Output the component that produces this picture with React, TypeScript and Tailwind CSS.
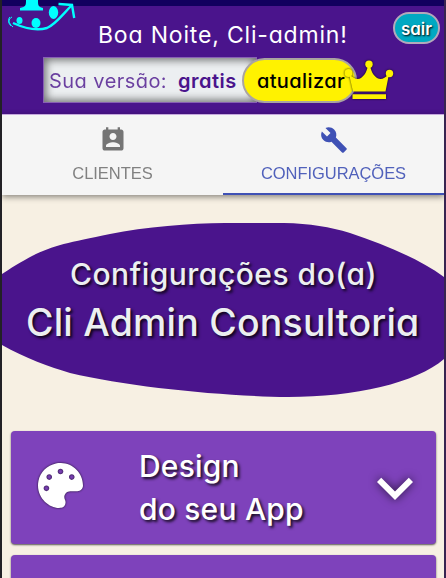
import React from "react";
import { FaPalette } from "react-icons/fa";

const shade = "[text-shadow:2px_2px_3px_rgba(0,0,0,0.85)]";

function Logo() {
  return (
    <svg className="absolute left-0 top-0" width="80" height="34" viewBox="0 0 80 34" fill="#0ff">
      <path d="M26 0h12c0 5 0 7 5 8v2.500H20V8c6-1 6-3 6-8z" />
      <ellipse cx="19.500" cy="20.500" rx="3" ry="3.500" />
      <ellipse cx="36" cy="23" rx="4.500" ry="5" />
      <ellipse cx="53.500" cy="12.500" rx="4.700" ry="6.500" />
      <path d="M13 23c11 5 24 8 34 5 9-4 15-13 25-23" fill="none" stroke="#0ff" strokeWidth="2.400" />
      <path d="M58.500 4l13.500 1 2.200 13" fill="none" stroke="#0ff" strokeWidth="2.400" />
      <path d="M12 17c-4 2-4 6 1 10M10 17c-3 3-1 7 1 9" fill="none" stroke="#0ff" strokeWidth="1" />
    </svg>
  );
}

function Crown() {
  return (
    <svg className="relative -ml-[14px] shrink-0 [filter:drop-shadow(0_0_1px_rgba(0,0,0,0.8))]" width="52" height="44" viewBox="342 58 52 44" fill="#fff200">
      <circle cx="347.500" cy="73" r="3.900" />
      <circle cx="368" cy="64.300" r="3.700" />
      <circle cx="388.500" cy="73.500" r="3.700" />
      <path d="M348 74C353 79 357 80 360 78C364 75 366 71 367 65H369C370 71 372 75 376 78C380 80 383 79 388 74L384.500 91.500H352z" />
      <path d="M351.500 94.200h33.500v4.800h-33.500z" />
    </svg>
  );
}

function Card({ children }: { children?: React.ReactNode }) {
  return (
    <section className="flex h-[113px] shrink-0 items-center rounded bg-[#7e42bb] shadow-[0_1px_2px_rgba(0,0,0,0.65)]">
      {children}
    </section>
  );
}

export default function App() {
  return (
    <div className="h-[578px] w-[446px] overflow-hidden border-l-2 border-r-2 border-l-[#222126] border-r-[#382451] bg-[#f7f0e3] font-['Inter',sans-serif] [font-feature-settings:'cv11']">
      <header className="relative -ml-[2px] h-[114px] border-l-2 border-l-[#222126] border-t-[6px] border-t-[#12005e] bg-[#4a148c]">
        <div className="absolute -left-[2px] -top-[6px]"><Logo /></div>
        <h1 className="ml-[96px] whitespace-nowrap pt-[13px] text-[23px] leading-[32px] tracking-[0.820px] text-white">Boa Noite, Cli-admin!</h1>
        <button className="absolute right-[4px] top-[6px] h-[32px] w-[47px] rounded-full border-2 border-[#b3a9bb] bg-[#00a9c2] pt-[2px] text-[17px] font-semibold leading-none text-white [text-shadow:1px_1px_2px_#000]">sair</button>
        <div className="ml-[41px] mt-[6px] flex h-[46px]">
          <div className="flex h-[46px] w-[214px] shrink-0 items-center whitespace-nowrap border border-[#8860b4] bg-[#eceff1] pl-[5px] pt-[2px] text-[20px] text-[#4a148c] shadow-[inset_0_0_8px_2px_rgba(0,0,0,0.55)]">
            <span className="w-[129px] tracking-[0.450px] opacity-80">Sua versão:</span>
            <b className="font-semibold tracking-[0.500px]">gratis</b>
          </div>
          <button className="-ml-[15px] mt-px h-[45px] w-[115px] shrink-0 whitespace-nowrap rounded-full border-2 border-[#aaa4a1] bg-[#fff200] pl-[3px] text-[20px] font-medium tracking-[0.400px] text-black">atualizar</button>
          <div className="mt-px flex"><Crown /></div>
        </div>
      </header>
      <nav className="relative grid h-[81px] grid-cols-2 border-t border-[#c5a8dd] bg-[#f5f5f5] font-['Liberation_Sans',Arial,sans-serif] text-[16.500px] leading-[24px] shadow-[0_2px_6px_rgba(0,0,0,0.45)]">
        <div className="flex flex-col items-center pt-[11px] text-[#757575]">
          <svg width="28" height="28" viewBox="0 0 24 24" fill="currentColor"><path d="M19 3h-1V1h-2v2H8V1H6v2H5c-1.110 0-2 .900-2 2v14c0 1.100.890 2 2 2h14c1.100 0 2-.900 2-2V5c0-1.100-.900-2-2-2zm-7 3c1.660 0 3 1.340 3 3s-1.340 3-3 3-3-1.340-3-3 1.340-3 3-3zm6 12H6v-1c0-2 4-3.100 6-3.100s6 1.100 6 3.100v1z" /></svg>
          <span className="mt-[7px] -tracking-[0.050px] opacity-90">CLIENTES</span>
        </div>
        <div className="flex flex-col items-center border-b-2 border-[#3f51b5] pt-[11px] text-[#3f51b5]">
          <svg width="28" height="28" viewBox="0 0 24 24" fill="currentColor"><path d="M22.700 19l-9.100-9.100c.900-2.300.400-5-1.500-6.900-2-2-5-2.400-7.400-1.300L9 6 6 9 1.600 4.700C.400 7.100.900 10.100 2.900 12.100c1.900 1.900 4.600 2.400 6.900 1.500l9.100 9.100c.400.400 1 .400 1.400 0l2.300-2.300c.500-.400.500-1.100.100-1.400z" /></svg>
          <span className="mt-[7px] -tracking-[0.050px] opacity-90">CONFIGURAÇÕES</span>
        </div>
      </nav>
      <div className="relative mt-[27px] h-[176px]">
        <svg className="absolute left-0 top-0" width="442" height="176" viewBox="2 222 442 176">
          <path d="M2 274C45 246 53 246 110 234C145 227 190 223 225 223H284C310 223.500 330 227 350 233C385 245 420 259 444 277V359C416 383 355 397 288 397C220 396 130 387 70 373C50 367 25 358 2 345z" fill="#4a148c" />
        </svg>
        <h2 className={"relative whitespace-nowrap pt-[29px] text-[#eceff1] " + shade}>
          <span className="ml-[68px] block text-[30px] font-medium leading-[46px] tracking-[0.500px]">Configurações do(a)</span>
          <span className="ml-[24px] block text-[37.500px] font-medium leading-[52px] tracking-[0.200px]">Cli Admin Consultoria</span>
        </h2>
      </div>
      <main className="mt-[33px] flex flex-col gap-[11px] pl-[9px] pr-[8px]">
        <Card>
          <FaPalette className="ml-[27px] -mt-[4px] h-[45px] w-[45px] shrink-0 text-white [filter:drop-shadow(0_0_1px_rgba(0,0,0,0.8))]" />
          <h3 className={"ml-[56px] w-[220px] shrink-0 whitespace-nowrap text-[30px] font-medium leading-[43px] tracking-[0.200px] text-white " + shade}>Design<br />do seu App</h3>
          <svg className="shrink-0 overflow-visible [filter:drop-shadow(0_0_5px_rgba(0,0,0,0.7))]" width="72" height="72" viewBox="0 0 24 24" fill="#fff"><path d="M7.410 8.590L12 13.170l4.590-4.580L18 10l-6 6-6-6z" /></svg>
        </Card>
        <Card />
      </main>
    </div>
  );
}
